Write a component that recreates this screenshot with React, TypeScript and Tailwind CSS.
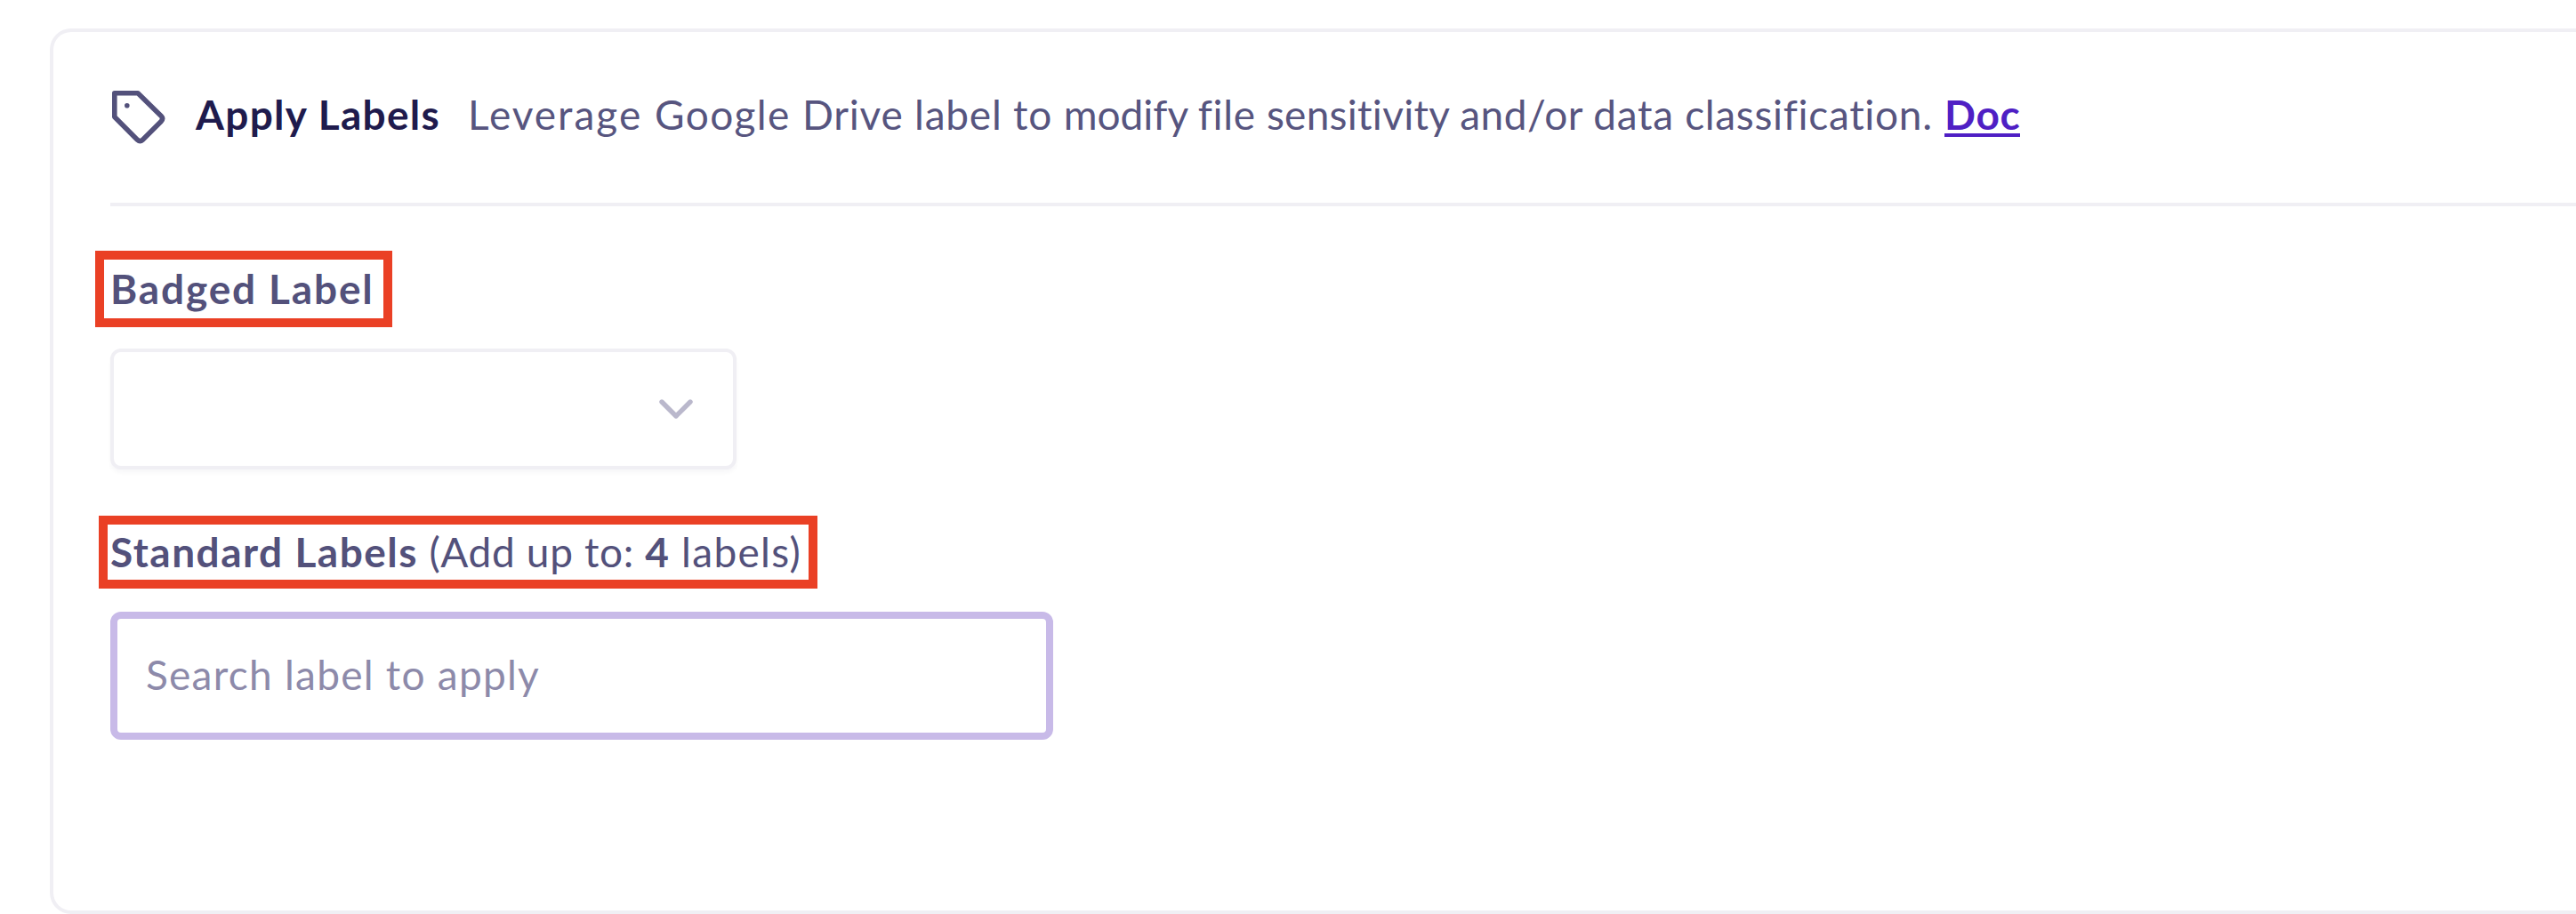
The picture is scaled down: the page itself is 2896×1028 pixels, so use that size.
import type { ReactNode } from 'react';

function TagIcon() {
  return (
    <svg viewBox="0 0 60 60" className="h-[60px] w-[60px] shrink-0" fill="none" stroke="#53517b" strokeWidth="5.6" strokeLinejoin="round">
      <path d="M2.8 2.8H29L55.2 28.4Q58 31.3 55.2 34.4L34.4 55.2Q31.5 58 28.4 55.2L2.8 29.6Z" />
      <circle cx="16.8" cy="16.8" r="2.8" fill="#53517b" stroke="none" />
    </svg>
  );
}

function Highlighted({ frame, children }: { frame: string; children: ReactNode }) {
  return (
    <div className="relative w-fit text-[46px] leading-[56px] whitespace-pre text-[#53517b]">
      {children}
      <span className={`pointer-events-none absolute border-10 border-[#ea4025] ${frame}`} />
    </div>
  );
}

export default function App() {
  return (
    <main className="h-[1028px] w-full overflow-hidden bg-white pt-8 pl-14 font-['Lato',sans-serif]">
      <section className="h-[996px] w-full rounded-l-[24px] border-y-4 border-l-4 border-[#f0eff4] pl-16">
        <header className="flex h-[196px] items-center border-b-4 border-[#f0eff4] pl-[2px] text-[46px] leading-[56px] whitespace-pre">
          <TagIcon />
          <h1 className="ml-[34px] w-[276px] pb-[6px] font-bold tracking-[1.3px] text-[#1f1b4d]">Apply Labels</h1>
          <p className="ml-[30px] w-[1660px] pb-[6px] tracking-[0.77px] text-[#57557f]">
            <span className="tracking-[2px]">Leverage </span>
            <span className="tracking-[1.4px]">Google </span>
            <span>Drive label to </span>
            <span className="tracking-[0px]">modify </span>
            <span className="tracking-[0.6px]">file </span>
            <span className="tracking-[0.27px]">sensitivity </span>
            <span className="tracking-[0.5px]">and/or </span>
            <span className="tracking-[0.68px]">data classification.</span>
          </p>
          <a href="#" className="relative w-[85px] pb-[6px] font-bold tracking-[0.7px] text-[#4f1fc4]">
            Doc
            <span className="absolute inset-x-0 top-[49px] h-1 bg-[#4f1fc4]" />
          </a>
        </header>

        <div className="pt-[65px]">
          <Highlighted frame="left-[-17px] top-[-15px] h-[86px] w-[334px]">
            <span className="font-bold tracking-[1.85px]">Badged Label</span>
          </Highlighted>
          <button className="mt-[39px] flex h-[136px] w-[704px] items-center justify-end rounded-[12px] border-4 border-[#f0eff4] bg-white pr-[44px] shadow-[0_4px_4px_rgba(30,27,77,0.03)]">
            <svg viewBox="0 0 40 24" className="h-6 w-10" fill="none" stroke="#bab8cc" strokeWidth="5.4" strokeLinecap="round" strokeLinejoin="round">
              <path d="M4 4L20 20L36 4" />
            </svg>
          </button>
        </div>

        <div className="pt-[65px]">
          <Highlighted frame="left-[-13px] top-[-13px] h-[82px] w-[808px]">
            <span className="font-bold tracking-[1.5px]">Standard Labels</span>
            <span className="tracking-[0.65px]"> (Add up to: </span>
            <span className="font-bold tracking-[1px]">4</span>
            <span className="tracking-[1.3px]"> labels)</span>
          </Highlighted>
          <input
            placeholder="Search label to apply"
            className="mt-[39px] block h-[144px] w-[1060px] rounded-[12px] border-8 border-[#c8bae8] bg-white pb-[4px] pl-[32px] text-[46px] tracking-[1.25px] text-[#53517b] outline-none placeholder:text-[#8d8aaa]"
          />
        </div>
      </section>
    </main>
  );
}
